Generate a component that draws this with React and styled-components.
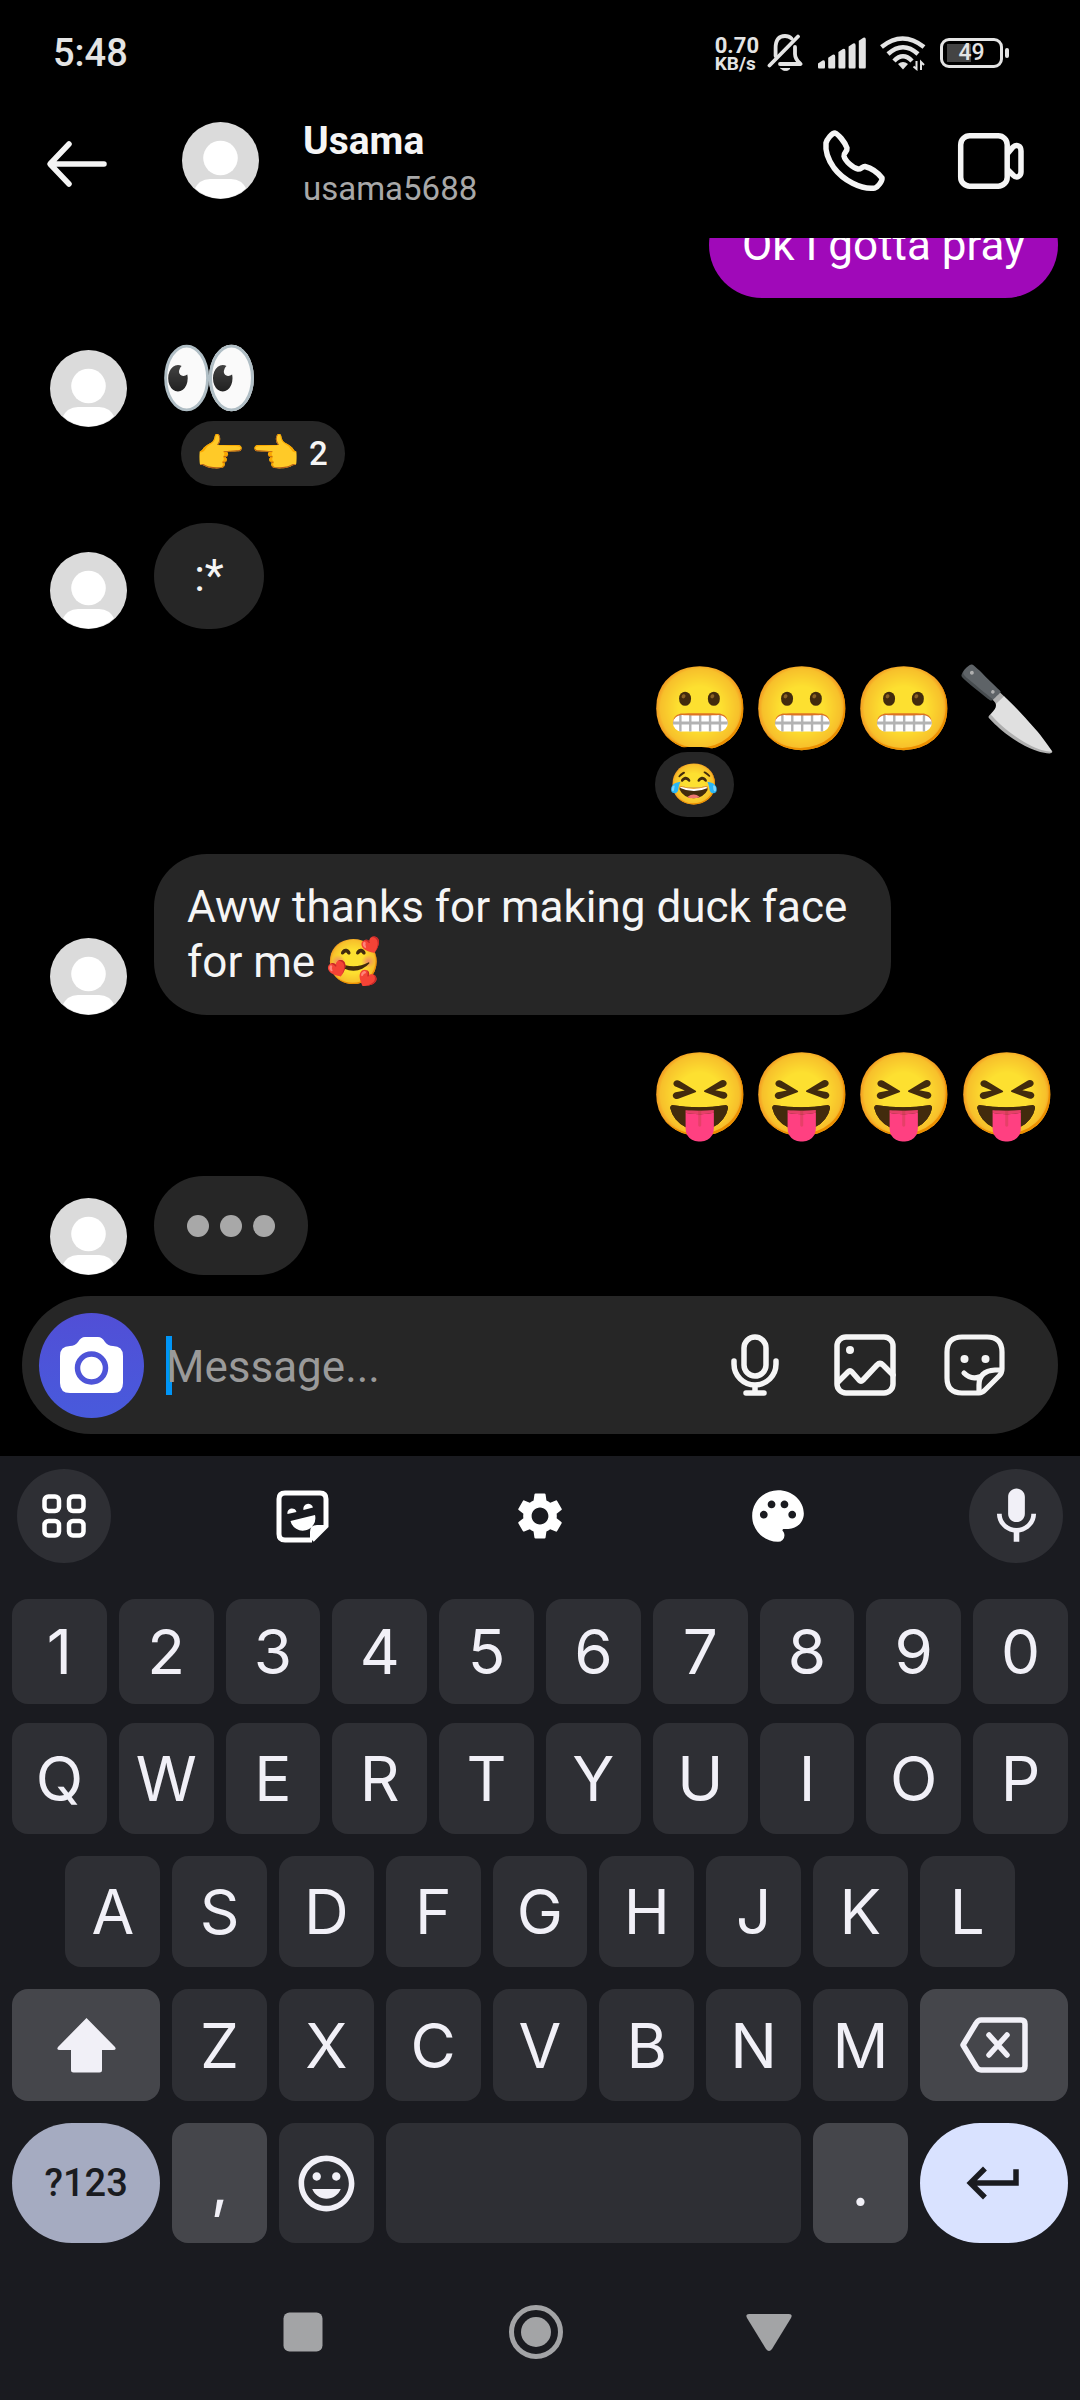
import React from "react";
import styled, { createGlobalStyle, css } from "styled-components";
import {
  MdKeyboardReturn,
  MdMic,
  MdPalette,
  MdSettings,
  MdTagFaces,
} from "react-icons/md";

const GlobalStyle = createGlobalStyle`
  *, *::before, *::after { box-sizing: border-box; }
  body { margin: 0; background: #000; }
  svg { display: block; flex: none; }
  button { border: 0; padding: 0; margin: 0; background: none; color: inherit; font: inherit; cursor: pointer; }
`;

const Screen = styled.div`
  display: flex;
  flex-direction: column;
  height: 100vh;
  background: #000;
  color: #f5f5f5;
  font-family: Roboto, "Noto Color Emoji", sans-serif;
  overflow: hidden;
`;

/* Status bar */

const StatusBar = styled.div`
  display: flex;
  flex: none;
  align-items: center;
  justify-content: space-between;
  height: 86px;
  padding: 20px 71px 0 53px;
  color: #e4e4e4;
`;

const Clock = styled.time`
  font-size: 38px;
  line-height: 44px;
  font-weight: 500;
`;

const StatusIcons = styled.div`
  display: flex;
  align-items: center;
  gap: 14px;
`;

const NetSpeed = styled.div`
  display: flex;
  flex-direction: column;
  margin-right: -6px;
  padding-top: 4px;
  font-size: 22px;
  line-height: 18px;
  font-weight: 700;
`;

const NetUnit = styled.span`
  font-size: 19px;
`;

const Battery = styled.div`
  display: flex;
  align-items: center;
  gap: 2px;
`;

const BatteryBody = styled.div`
  display: flex;
  align-items: center;
  justify-content: center;
  width: 63px;
  height: 30px;
  border: 3px solid #e4e4e4;
  border-radius: 9px;
  background: linear-gradient(#444, #444) 4px center / 24px 18px no-repeat;
  font-size: 23px;
  line-height: 24px;
  font-weight: 500;
`;

const BatteryNub = styled.div`
  width: 4px;
  height: 10px;
  border-radius: 2px;
  background: #e4e4e4;
`;

/* Header */

const Header = styled.header`
  display: flex;
  flex: none;
  align-items: center;
  height: 152px;
  padding: 0 54px 3px 44px;
`;

const IconButton = styled.button`
  display: flex;
  flex: none;
  align-items: center;
  justify-content: center;
`;

const Profile = styled.div`
  display: flex;
  flex: 1;
  align-items: center;
  gap: 44px;
  min-width: 0;
  padding-left: 72px;
`;

const Names = styled.div`
  display: flex;
  flex-direction: column;
  gap: 2px;
  padding-top: 9px;
`;

const DisplayName = styled.h1`
  margin: 0;
  font-size: 39px;
  line-height: 46px;
  font-weight: 700;
`;

const Handle = styled.span`
  color: #a8a8a8;
  font-size: 33px;
  line-height: 46px;
`;

const HeaderActions = styled.div`
  display: flex;
  align-items: center;
  gap: 69px;
`;

/* Conversation */

const Conversation = styled.main`
  display: flex;
  flex: 1 1 0;
  flex-direction: column;
  justify-content: flex-end;
  gap: 37px;
  min-height: 0;
  padding: 0 22px 21px 50px;
  overflow: hidden;
`;

const MessageRow = styled.div`
  display: flex;
  flex: none;
  align-items: flex-end;
  justify-content: ${(p) => (p.$mine ? "flex-end" : "flex-start")};
  gap: 27px;
`;

const AvatarSlot = styled.div`
  padding-bottom: ${(p) => (p.$reacted ? 59 : 0)}px;
`;

const Stack = styled.div`
  display: flex;
  flex-direction: column;
  align-items: flex-start;
`;

const Bubble = styled.div`
  min-width: 110px;
  max-width: 737px;
  padding: 26px 33px 25px;
  border-radius: 53px;
  background: ${(p) => (p.$mine ? "#a009b9" : "#262626")};
  color: ${(p) => (p.$mine ? "#fff" : "#f5f5f5")};
  font-size: 44px;
  line-height: 55px;
  text-align: ${(p) => (p.$centered ? "center" : "left")};
`;

const BigEmoji = styled.div`
  height: 87px;
  padding-left: ${(p) => (p.$mine ? 0 : 4)}px;
  font-size: 82px;
  line-height: 87px;
  white-space: nowrap;
`;

const Reactions = styled.button`
  display: flex;
  align-items: center;
  height: 65px;
  margin: -1px 0 0 ${(p) => (p.$mine ? 5 : 27)}px;
  padding: 0 12px;
  border-radius: 33px;
  background: #262626;
  box-shadow: 0 0 0 5px #000;
  font-size: 40px;
  line-height: 65px;
`;

const ReactionEmoji = styled.span`
  width: 55px;
  text-align: center;
`;

const ReactionCount = styled.span`
  margin: 0 5px 0 6px;
  font-size: 33px;
  font-weight: 500;
`;

const Typing = styled.div`
  display: flex;
  align-items: center;
  gap: 11px;
  height: 99px;
  padding: 0 33px;
  border-radius: 50px;
  background: #262626;
`;

const TypingDot = styled.span`
  width: 22px;
  height: 22px;
  border-radius: 50%;
  background: #a8a8a8;
`;

/* Composer */

const Composer = styled.form`
  display: flex;
  flex: none;
  align-items: center;
  height: 138px;
  margin: 0 22px 22px;
  padding: 0 52px 0 17px;
  border-radius: 69px;
  background: #262626;
`;

const CameraButton = styled(IconButton)`
  width: 105px;
  height: 105px;
  border-radius: 50%;
  background: linear-gradient(#514fd6, #485adc);
`;

const Field = styled.label`
  position: relative;
  display: flex;
  flex: 1;
  align-items: center;
  min-width: 0;
  margin-left: 22px;
`;

const Caret = styled.span`
  position: absolute;
  left: 0;
  width: 6px;
  height: 59px;
  background: #0095f6;
`;

const MessageInput = styled.input`
  position: relative;
  width: 100%;
  padding: 4px 0 0;
  border: 0;
  outline: 0;
  background: transparent;
  color: #f5f5f5;
  font-family: Roboto, sans-serif;
  font-size: 44px;
  line-height: 60px;
  &::placeholder { color: #9a9a9a; opacity: 1; }
`;

const ComposerActions = styled.div`
  display: flex;
  gap: 48px;
`;

/* Keyboard */

const Keyboard = styled.section`
  flex: none;
  background: #1a1b20;
  color: #f1f0f7;
`;

const Toolbar = styled.div`
  display: flex;
  align-items: center;
  justify-content: space-between;
  height: 120px;
  padding: 0 17px;
  color: #fff;
`;

const ToolButton = styled(IconButton)`
  width: 94px;
  height: 94px;
  border-radius: 50%;
  background: ${(p) => (p.$filled ? "#2e2f34" : "transparent")};
`;

const Keys = styled.div`
  display: flex;
  flex-direction: column;
  padding: 23px 6px 21px;
  font-family: Inter, sans-serif;
  font-size: 62px;
`;

const KeyRow = styled.div`
  display: grid;
  grid-template-columns: repeat(20, minmax(0, 1fr));
  height: ${(p) => p.$height}px;
  & + & { margin-top: 22px; }
  &:first-child + & { margin-top: 19px; }
`;

const keyTones = {
  plain: css`background: #2e2f34;`,
  raised: css`background: #45464b;`,
  symbols: css`background: #a5abc1; color: #1a1b20; border-radius: 60px;`,
  enter: css`background: #d9e2ff; color: #1a1b20; border-radius: 60px;`,
};

const Key = styled.button`
  display: flex;
  align-items: center;
  justify-content: center;
  grid-column: ${(p) => (p.$start ? p.$start : "auto")} / span ${(p) => p.$span || 2};
  margin: 0 6px;
  border-radius: 16px;
  ${(p) => keyTones[p.$tone || "plain"]}
`;

const SymbolsLabel = styled.span`
  font-family: Roboto, sans-serif;
  font-size: 38px;
  font-weight: 500;
`;

const NavBar = styled.nav`
  display: flex;
  align-items: center;
  justify-content: center;
  gap: 177px;
  height: 136px;
  padding-right: 8px;
  color: #a3a4a6;
`;

/* Drawings */

const line = {
  fill: "none",
  stroke: "currentColor",
  strokeLinecap: "round",
  strokeLinejoin: "round",
};

const Avatar = () => (
  <svg width="77" height="77" viewBox="0 0 77 77" role="img" aria-label="Usama">
    <clipPath id="disc">
      <circle cx="38.5" cy="38.5" r="37.8" />
    </clipPath>
    <circle cx="38.5" cy="38.5" r="38.5" fill="#dbdbdb" />
    <circle cx="38.5" cy="36" r="17.3" fill="#fff" />
    <path clipPath="url(#disc)" d="M12 68 Q17 57 28 57 H49 Q60 57 65 68 V77 H12Z" fill="#fff" />
  </svg>
);

const BackIcon = () => (
  <svg width="66" height="66" viewBox="0 0 66 66" {...line} strokeWidth="5.5">
    <path d="M25 16 L6 36 L25 56 M7 36 H60" />
  </svg>
);

const PhoneIcon = () => (
  <svg width="66" height="66" viewBox="0 0 66 66" {...line} strokeWidth="5.5">
    <path d="M14 5 C17 6 24 14 26 20 C26.500 24 22.500 24.500 23 28 C24 33 32 40 37 41 C40 41.500 41.500 38 44 38.500 C50 40 57 45 61 50 C61.500 53 57 59 54 60 C40 62 22 52 13 40 C8 33 4 24 5 15 C6 11 11 5 14 5Z" />
  </svg>
);

const VideoIcon = () => (
  <svg width="70" height="60" viewBox="0 0 70 60" {...line} strokeWidth="5.5">
    <rect x="4.700" y="4.700" width="46.500" height="50.500" rx="9" />
    <path d="M52 22 L57 16 Q60 13.500 62.500 15 Q65 16 65 20 V41 Q65 44 62.500 45.500 Q60 47 57 44 L52 39" />
  </svg>
);

const BellOffIcon = () => (
  <svg width="37" height="38" viewBox="0 0 37 38" {...line} strokeWidth="3.8">
    <path d="M8.600 22 V14 Q8.600 2 18 2 Q22 2 24.500 4.500" />
    <path d="M28 13 V20 Q28 25 33.500 30 H13 M2.500 31.500 L31 2.500" />
    <path d="M14 34.500 H23 Q21.500 36.500 18.500 36.500 Q15.500 36.500 14 34.500Z" fill="currentColor" strokeWidth="1" />
  </svg>
);

const SignalIcon = () => (
  <svg width="48" height="32" viewBox="0 0 48 32" fill="currentColor">
    {[0, 1, 2, 3, 4].map((i) => {
      const x = i * 10.2;
      const top = 23.5 - i * 5.7;
      return (
        <path
          key={i}
          d={`M${x + 1} 31.500 Q${x} 31.500 ${x} 30 V${top + 3} L${x + 4.5} ${top} Q${x + 7} ${top - 1} ${x + 7} ${top + 2} V30 Q${x + 7} 31.500 ${x + 6} 31.500Z`}
        />
      );
    })}
  </svg>
);

const WifiIcon = () => (
  <svg width="46" height="36" viewBox="0 0 46 36" fill="none" stroke="currentColor" strokeWidth="4.5">
    <path d="M1.500 12 Q22.500 -5 44 12 M8 19 Q23 5.500 38 19 M14 26 Q23 16.500 32 26" />
    <path d="M18 29 Q23 25 28 29 L23 34.500Z" fill="currentColor" stroke="none" />
    <path d="M36.500 26 V34 L33.500 31.500 M41 35 V27 L44 30" strokeWidth="2" />
  </svg>
);

const CameraIcon = () => (
  <svg width="63" height="56" viewBox="0 0 63 56">
    <path
      d="M10 9 Q15 9 18 5 Q21 0 25 0 H38 Q42 0 45 5 Q48 9 53 9 Q63 9 63 19 V46 Q63 56 53 56 H10 Q0 56 0 46 V19 Q0 9 10 9Z"
      fill="#fff"
    />
    <circle cx="31.500" cy="31" r="14" fill="#fff" stroke="#4e54d8" strokeWidth="5.500" />
  </svg>
);

const VoiceIcon = () => (
  <svg width="62" height="62" viewBox="0 0 62 62" {...line} strokeWidth="5.500">
    <rect x="20" y="3" width="22" height="39" rx="11" />
    <path d="M10 27 V30 A21 21 0 0 0 52 30 V27 M31 52 V57 M22 59 H40" />
  </svg>
);

const GalleryIcon = () => (
  <svg width="62" height="62" viewBox="0 0 62 62" {...line} strokeWidth="5.500">
    <rect x="3" y="3" width="56" height="56" rx="9" />
    <path d="M4 48 L14 38 Q16 36 18 38 L25 46 Q27 48 29 46 L43 31 Q46 28 49 31 L59 41" />
    <circle cx="16" cy="16" r="4" fill="currentColor" stroke="none" />
  </svg>
);

const StickerIcon = () => (
  <svg width="62" height="62" viewBox="0 0 62 62" {...line} strokeWidth="5.200">
    <path d="M35 59 H18 Q3 59 3 44 V18 Q3 3 18 3 H43 Q58 3 58 18 V35 Q58 39 55 42 L41 56 Q38 59 35 59" />
    <path d="M56 36 H51 Q35 37 35 51 V58 M20 39 Q27 46 35 43" />
    <circle cx="20.500" cy="25" r="4" fill="currentColor" stroke="none" />
    <circle cx="41.500" cy="25" r="4" fill="currentColor" stroke="none" />
  </svg>
);

const AppsIcon = () => (
  <svg width="44" height="44" viewBox="0 0 44 44" fill="none" stroke="currentColor" strokeWidth="4.500">
    {[2.5, 27].map((x) =>
      [2.5, 27].map((y) => <rect key={`${x}-${y}`} x={x} y={y} width="14.500" height="14.500" rx="4" />)
    )}
  </svg>
);

const StickerKeyIcon = () => (
  <svg width="53" height="53" viewBox="0 0 53 53">
    <path
      d="M36 50 H9 Q3 50 3 44 V9 Q3 3 9 3 H44 Q50 3 50 9 V36 L36 50"
      fill="none"
      stroke="currentColor"
      strokeWidth="5"
    />
    <path
      d="M34 50 V42 Q34 35 41 35 H50 L36 50Z M11.500 24 A4.500 4.500 0 0 1 20.500 22Z M27.500 20 A4.500 4.500 0 0 1 37 17.500Z M14.500 31 L39 25 A12.500 12.500 0 0 1 14.500 31Z"
      fill="currentColor"
    />
  </svg>
);

const ShiftIcon = () => (
  <svg width="59" height="55" viewBox="0 0 59 55" fill="currentColor">
    <path d="M29.500 0 L58 29 Q60 32 56 32 H45 V52 Q45 54.500 42.500 54.500 H16.500 Q14 54.500 14 52 V32 H3 Q-1 32 1 29Z" />
  </svg>
);

const BackspaceIcon = () => (
  <svg width="70" height="56" viewBox="0 0 70 56" {...line} strokeWidth="5.500">
    <path d="M4 28 L17 6.500 Q19 3 22 3 H62 Q66 3 66 7 V49 Q66 53 62 53 H22 Q19 53 17 49.500Z" />
    <path d="M30 18 L48 38 M48 18 L30 38" />
  </svg>
);

const RecentsIcon = () => (
  <svg width="56" height="56" viewBox="0 0 56 56" fill="currentColor">
    <rect x="8.500" y="8.500" width="39" height="39" rx="6" />
  </svg>
);

const HomeIcon = () => (
  <svg width="56" height="56" viewBox="0 0 56 56" fill="currentColor">
    <circle cx="28" cy="28" r="24.500" fill="none" stroke="currentColor" strokeWidth="5" />
    <circle cx="28" cy="28" r="15" />
  </svg>
);

const HideKeyboardIcon = () => (
  <svg width="56" height="56" viewBox="0 0 56 56" fill="currentColor">
    <path d="M8 10 H48 Q52 10 50 14 L31 45 Q28 49 25 45 L6 14 Q4 10 8 10Z" />
  </svg>
);

const TheirMessage = ({ reacted, children }) => (
  <MessageRow>
    <AvatarSlot $reacted={reacted}>
      <Avatar />
    </AvatarSlot>
    <Stack>{children}</Stack>
  </MessageRow>
);

const MyMessage = ({ children }) => (
  <MessageRow $mine>
    <Stack>{children}</Stack>
  </MessageRow>
);

const letters = (text) => text.split("").map((c) => <Key type="button" key={c}>{c}</Key>);

export default function App() {
  return (
    <>
      <GlobalStyle />
      <Screen>
        <StatusBar>
          <Clock>5:48</Clock>
          <StatusIcons>
            <NetSpeed>
              <span>0.70</span>
              <NetUnit>KB/s</NetUnit>
            </NetSpeed>
            <BellOffIcon />
            <SignalIcon />
            <WifiIcon />
            <Battery>
              <BatteryBody>49</BatteryBody>
              <BatteryNub />
            </Battery>
          </StatusIcons>
        </StatusBar>

        <Header>
          <IconButton type="button" aria-label="Back"><BackIcon /></IconButton>
          <Profile>
            <Avatar />
            <Names>
              <DisplayName>Usama</DisplayName>
              <Handle>usama5688</Handle>
            </Names>
          </Profile>
          <HeaderActions>
            <IconButton type="button" aria-label="Voice call"><PhoneIcon /></IconButton>
            <IconButton type="button" aria-label="Video call"><VideoIcon /></IconButton>
          </HeaderActions>
        </Header>

        <Conversation>
          <MyMessage>
            <Bubble $mine>Ok I gotta pray</Bubble>
          </MyMessage>
          <TheirMessage reacted>
            <BigEmoji>👀</BigEmoji>
            <Reactions type="button">
              <ReactionEmoji>👉</ReactionEmoji>
              <ReactionEmoji>👈</ReactionEmoji>
              <ReactionCount>2</ReactionCount>
            </Reactions>
          </TheirMessage>
          <TheirMessage>
            <Bubble $centered>:*</Bubble>
          </TheirMessage>
          <MyMessage>
            <BigEmoji $mine>😬😬😬🔪</BigEmoji>
            <Reactions type="button" $mine>
              <ReactionEmoji>😂</ReactionEmoji>
            </Reactions>
          </MyMessage>
          <TheirMessage>
            <Bubble>Aww thanks for making duck face for me 🥰</Bubble>
          </TheirMessage>
          <MyMessage>
            <BigEmoji $mine>😝😝😝😝</BigEmoji>
          </MyMessage>
          <TheirMessage>
            <Typing role="status" aria-label="Usama is typing">
              <TypingDot />
              <TypingDot />
              <TypingDot />
            </Typing>
          </TheirMessage>
        </Conversation>

        <Composer onSubmit={(e) => e.preventDefault()}>
          <CameraButton type="button" aria-label="Camera"><CameraIcon /></CameraButton>
          <Field>
            <Caret />
            <MessageInput type="text" aria-label="Message" placeholder="Message..." />
          </Field>
          <ComposerActions>
            <IconButton type="button" aria-label="Voice message"><VoiceIcon /></IconButton>
            <IconButton type="button" aria-label="Gallery"><GalleryIcon /></IconButton>
            <IconButton type="button" aria-label="Stickers"><StickerIcon /></IconButton>
          </ComposerActions>
        </Composer>

        <Keyboard aria-label="Keyboard">
          <Toolbar>
            <ToolButton type="button" $filled aria-label="Keyboard menu"><AppsIcon /></ToolButton>
            <ToolButton type="button" aria-label="Sticker keyboard"><StickerKeyIcon /></ToolButton>
            <ToolButton type="button" aria-label="Settings"><MdSettings size={56} /></ToolButton>
            <ToolButton type="button" aria-label="Theme"><MdPalette size={62} /></ToolButton>
            <ToolButton type="button" $filled aria-label="Voice typing"><MdMic size={67} color="#f1f0f7" /></ToolButton>
          </Toolbar>
          <Keys>
            <KeyRow $height={105}>{letters("1234567890")}</KeyRow>
            <KeyRow $height={111}>{letters("QWERTYUIOP")}</KeyRow>
            <KeyRow $height={111}>
              <Key type="button" $start={2}>A</Key>
              {letters("SDFGHJKL")}
            </KeyRow>
            <KeyRow $height={112}>
              <Key type="button" $span={3} $tone="raised" aria-label="Shift"><ShiftIcon /></Key>
              {letters("ZXCVBNM")}
              <Key type="button" $span={3} $tone="raised" aria-label="Backspace"><BackspaceIcon /></Key>
            </KeyRow>
            <KeyRow $height={120}>
              <Key type="button" $span={3} $tone="symbols"><SymbolsLabel>?123</SymbolsLabel></Key>
              <Key type="button" $tone="raised">,</Key>
              <Key type="button" aria-label="Emoji"><MdTagFaces size={67} /></Key>
              <Key type="button" $span={8} aria-label="Space" />
              <Key type="button" $tone="raised">.</Key>
              <Key type="button" $span={3} $tone="enter" aria-label="Enter"><MdKeyboardReturn size={66} /></Key>
            </KeyRow>
          </Keys>
          <NavBar>
            <IconButton type="button" aria-label="Recent apps"><RecentsIcon /></IconButton>
            <IconButton type="button" aria-label="Home"><HomeIcon /></IconButton>
            <IconButton type="button" aria-label="Hide keyboard"><HideKeyboardIcon /></IconButton>
          </NavBar>
        </Keyboard>
      </Screen>
    </>
  );
}
